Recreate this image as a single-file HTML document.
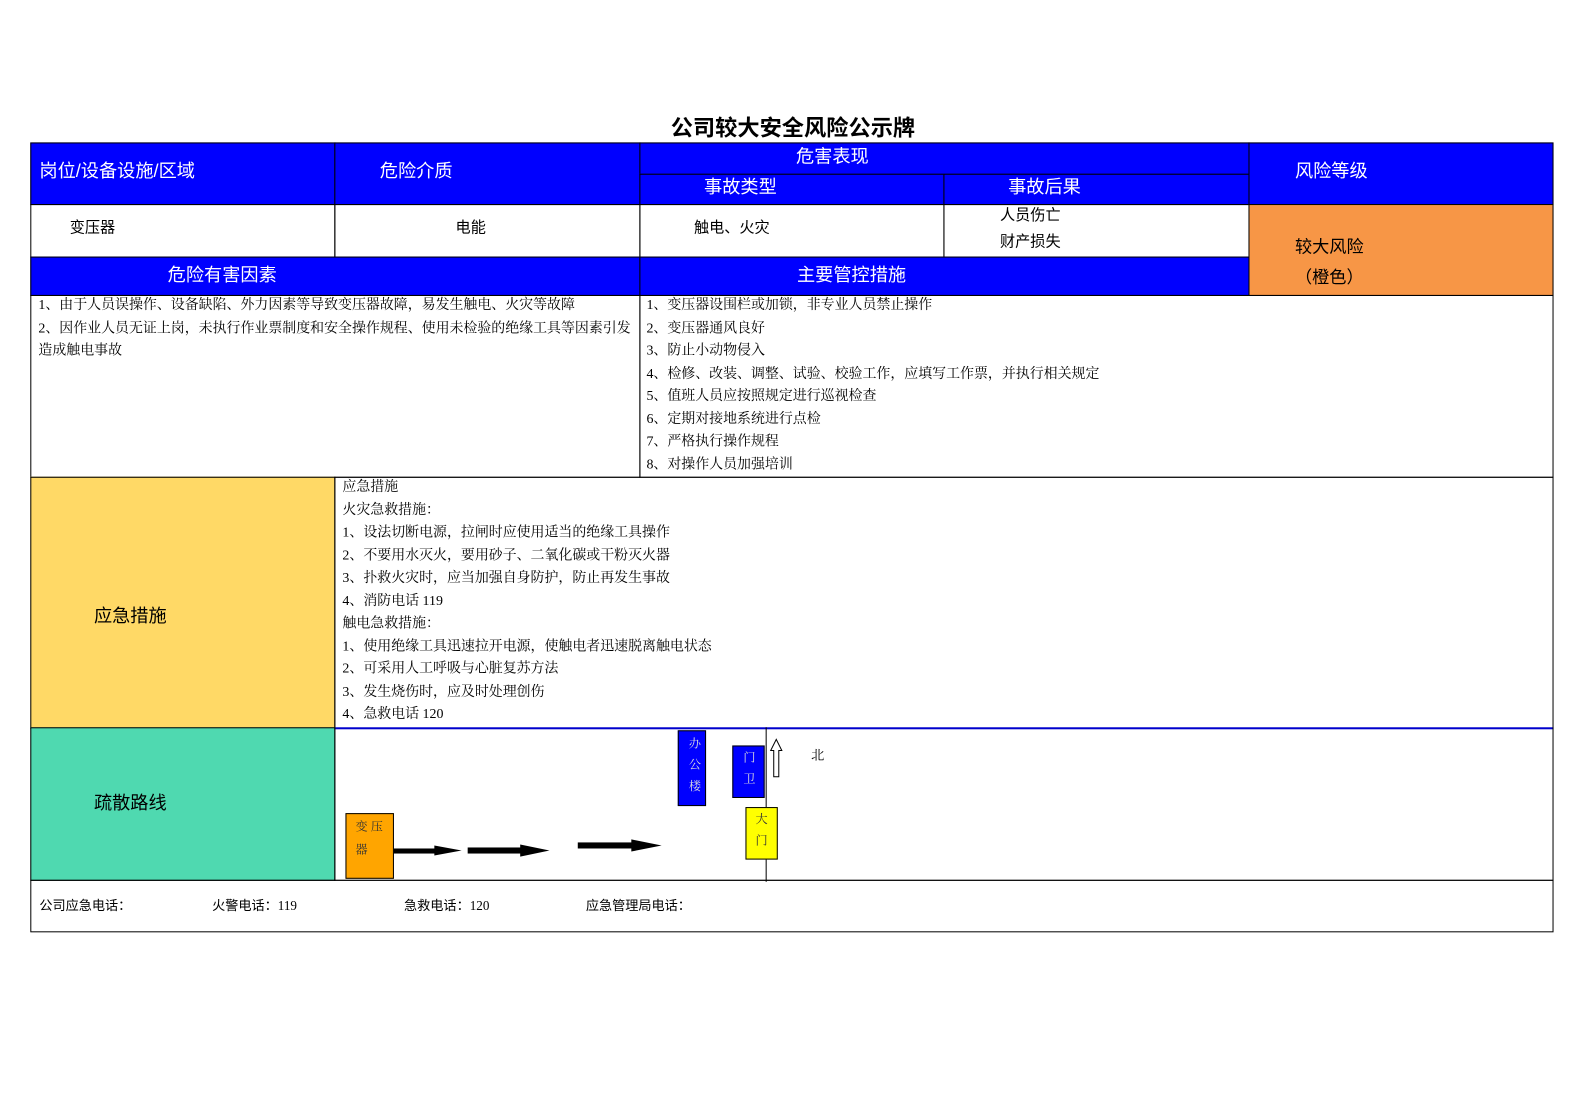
<!DOCTYPE html>
<html style="margin:0;padding:0;width:1583px;height:1118px;overflow:hidden"><head><meta charset="utf-8"><style>
body{margin:0;width:1583px;height:1118px;background:#fff;position:relative;overflow:hidden;font-family:"Liberation Sans","Noto Sans CJK SC",sans-serif}
#w{position:absolute;left:0;top:0;width:1583px;height:1118px;transform:scale(1.0101);transform-origin:0 0}
.c{position:absolute;box-sizing:border-box;border:1px solid #000}
.b{background:#0000ff;color:#fff;font-size:18px}
.t{position:absolute;white-space:nowrap}
.s{font-family:"Liberation Serif","Noto Serif CJK SC",serif;font-size:13.8px;color:#000;line-height:22.5px}
</style></head><body><div id="w">
<div class="t" style="left:0;width:1570px;text-align:center;top:109px;font-size:22px;font-weight:bold">公司较大安全风险公示牌</div>

<div class="c b" style="left:30px;top:141px;width:302px;height:62px"></div>
<div class="t" style="left:39px;top:155px;color:#fff;font-size:18px">岗位/设备设施/区域</div>
<div class="c b" style="left:331px;top:141px;width:303px;height:62px"></div>
<div class="t" style="left:376px;top:155px;color:#fff;font-size:18px">危险介质</div>
<div class="c b" style="left:633px;top:141px;width:604px;height:32px"></div>
<div class="t" style="left:788px;top:141px;color:#fff;font-size:18px">危害表现</div>
<div class="c b" style="left:633px;top:172px;width:302px;height:31px"></div>
<div class="t" style="left:697px;top:171px;color:#fff;font-size:18px">事故类型</div>
<div class="c b" style="left:934px;top:172px;width:303px;height:31px"></div>
<div class="t" style="left:998px;top:171px;color:#fff;font-size:18px">事故后果</div>
<div class="c b" style="left:1236px;top:141px;width:302px;height:62px"></div>
<div class="t" style="left:1282px;top:155px;color:#fff;font-size:18px">风险等级</div>

<div class="c" style="left:30px;top:202px;width:302px;height:53px"></div>
<div class="t" style="left:69px;top:214px;font-size:15px">变压器</div>
<div class="c" style="left:331px;top:202px;width:303px;height:53px"></div>
<div class="t" style="left:451px;top:214px;font-size:15px">电能</div>
<div class="c" style="left:633px;top:202px;width:302px;height:53px"></div>
<div class="t" style="left:687px;top:214px;font-size:15px">触电、火灾</div>
<div class="c" style="left:934px;top:202px;width:303px;height:53px"></div>
<div class="t" style="left:990px;top:201px;font-size:15px;line-height:26px">人员伤亡<br>财产损失</div>
<div class="c" style="left:1236px;top:202px;width:302px;height:91px;background:#f79646"></div>
<div class="t" style="left:1282px;top:230px;font-size:17px;line-height:30px">较大风险<br>（橙色）</div>

<div class="c b" style="left:30px;top:254px;width:604px;height:39px"></div>
<div class="t" style="left:166px;top:258px;color:#fff;font-size:18px">危险有害因素</div>
<div class="c b" style="left:633px;top:254px;width:604px;height:39px"></div>
<div class="t" style="left:789px;top:258px;color:#fff;font-size:18px">主要管控措施</div>

<div class="c" style="left:30px;top:292px;width:604px;height:181px"></div>
<div class="t s" style="left:38px;top:291px">1、由于人员误操作、设备缺陷、外力因素等导致变压器故障，易发生触电、火灾等故障<br>2、因作业人员无证上岗，未执行作业票制度和安全操作规程、使用未检验的绝缘工具等因素引发<br>造成触电事故</div>
<div class="c" style="left:633px;top:292px;width:905px;height:181px"></div>
<div class="t s" style="left:640px;top:291px">1、变压器设围栏或加锁，非专业人员禁止操作<br>2、变压器通风良好<br>3、防止小动物侵入<br>4、检修、改装、调整、试验、校验工作，应填写工作票，并执行相关规定<br>5、值班人员应按照规定进行巡视检查<br>6、定期对接地系统进行点检<br>7、严格执行操作规程<br>8、对操作人员加强培训</div>

<div class="c" style="left:30px;top:472px;width:302px;height:250px;background:#ffd966"></div>
<div class="t" style="left:93px;top:596px;font-size:18px">应急措施</div>
<div class="c" style="left:331px;top:472px;width:1207px;height:250px;border-bottom:2px solid #0000cc"></div>
<div class="t s" style="left:339px;top:471px">应急措施<br>火灾急救措施：<br>1、设法切断电源，拉闸时应使用适当的绝缘工具操作<br>2、不要用水灭火，要用砂子、二氧化碳或干粉灭火器<br>3、扑救火灾时，应当加强自身防护，防止再发生事故<br>4、消防电话 119<br>触电急救措施：<br>1、使用绝缘工具迅速拉开电源，使触电者迅速脱离触电状态<br>2、可采用人工呼吸与心脏复苏方法<br>3、发生烧伤时，应及时处理创伤<br>4、急救电话 120</div>

<div class="c" style="left:30px;top:720px;width:302px;height:152px;background:#4fd9b0"></div>
<div class="t" style="left:93px;top:781px;font-size:18px">疏散路线</div>
<div class="c" style="left:331px;top:720px;width:1207px;height:152px;border-top:none"></div>
<div style="position:absolute;left:758px;top:720px;width:1px;height:153px;background:#000"></div>
<div class="c" style="left:342px;top:805px;width:48px;height:65px;background:#ffa500"></div>
<div class="t s" style="left:352px;top:807px;color:#333;font-size:12px">变 压<br>器</div>
<div class="c" style="left:671px;top:723px;width:28px;height:75px;background:#0000ff"></div>
<div class="t s" style="left:682px;top:726px;color:#ddd;font-size:12px;line-height:21px">办<br>公<br>楼</div>
<div class="c" style="left:725px;top:738px;width:32px;height:52px;background:#0000ff"></div>
<div class="t s" style="left:736px;top:740px;color:#ddd;font-size:12px;line-height:21px">门<br>卫</div>
<div class="c" style="left:738px;top:799px;width:32px;height:52px;background:#ffff00"></div>
<div class="t s" style="left:748px;top:801px;color:#333;font-size:12px;line-height:21px">大<br>门</div>
<div class="t s" style="left:803px;top:737px;font-size:13px">北</div>
<svg style="position:absolute;left:330px;top:720px" width="460" height="150" viewBox="330 720 460 150">
<g fill="#000">
<rect x="390" y="840" width="45" height="5"/><polygon points="430,837 457,842 430,847"/>
<rect x="463" y="839" width="55" height="6"/><polygon points="515,836 544,842 515,848"/>
<rect x="572" y="834" width="55" height="6"/><polygon points="625,831 655,837 625,843"/>
</g>
<polygon points="766,743 766,769 771,769 771,743 774,743 768.5,732 763,743" fill="#fff" stroke="#000" stroke-width="1"/>
</svg>

<div class="c" style="left:30px;top:871px;width:1508px;height:52px"></div>
<div class="t" style="left:39px;top:886px;font-size:13px;font-family:'Liberation Serif','Noto Sans CJK SC',serif">公司应急电话：</div>
<div class="t" style="left:210px;top:886px;font-size:13px;font-family:'Liberation Serif','Noto Sans CJK SC',serif">火警电话：119</div>
<div class="t" style="left:400px;top:886px;font-size:13px;font-family:'Liberation Serif','Noto Sans CJK SC',serif">急救电话：120</div>
<div class="t" style="left:580px;top:886px;font-size:13px;font-family:'Liberation Serif','Noto Sans CJK SC',serif">应急管理局电话：</div>
</div></body></html>
